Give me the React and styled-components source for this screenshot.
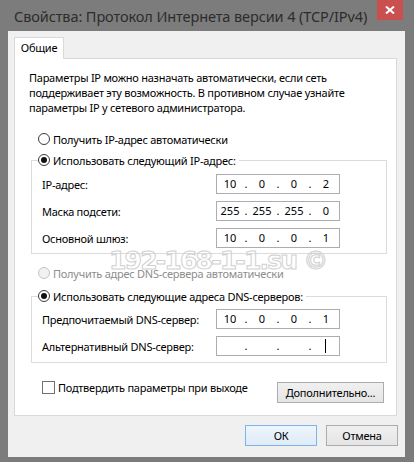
import React from "react"
import styled, {createGlobalStyle} from "styled-components"

const GlobalStyle = createGlobalStyle`
  html, body {
    margin: 0;
    padding: 0;
    background: #7c7c7c;
  }
  * {
    box-sizing: border-box;
  }
`

const FONT = `"Noto Sans", "DejaVu Sans", sans-serif`

const ipRows = [
  {label: "IP-адрес:", value: ["10", "0", "0", "2"]},
  {label: "Маска подсети:", value: ["255", "255", "255", "0"]},
  {label: "Основной шлюз:", value: ["10", "0", "0", "1"]},
]

const dnsRows = [
  {label: "Предпочитаемый DNS-сервер:", value: ["10", "0", "0", "1"]},
  {label: "Альтернативный DNS-сервер:", value: ["", "", "", ""], caret: true},
]

const IpField = ({value, caret}) => (
  <IpBox>
    {value.map((octet, i) => (
      <React.Fragment key={i}>
        {i > 0 && <IpDot>.</IpDot>}
        <IpOctet>
          {octet}
          {caret && i === 3 && <Caret />}
        </IpOctet>
      </React.Fragment>
    ))}
  </IpBox>
)

const FieldRows = ({rows}) => (
  <Fields>
    {rows.map((row) => (
      <FieldRow key={row.label}>
        <FieldLabel>{row.label}</FieldLabel>
        <IpField value={row.value} caret={row.caret} />
      </FieldRow>
    ))}
  </Fields>
)

const CloseIcon = () => (
  <svg width="10" height="8" viewBox="0 0 10 8">
    <path d="M1 0.5 L9 7.5 M9 0.5 L1 7.5" stroke="#fff" strokeWidth="2" />
  </svg>
)

const App = () => {
  return (
    <>
      <GlobalStyle />
      <Window>
        <TitleBar>
          <Title>Свойства: Протокол Интернета версии 4 (TCP/IPv4)</Title>
          <CloseButton>
            <CloseIcon />
          </CloseButton>
        </TitleBar>
        <Client>
          <Tabs>
            <Tab>Общие</Tab>
          </Tabs>
          <Panel>
            <Description>
              Параметры IP можно назначать автоматически, если сеть
              <br />
              поддерживает эту возможность. В противном случае узнайте
              <br />
              параметры IP у сетевого администратора.
            </Description>

            <RadioRow $top={16}>
              <Radio />
              <span>Получить IP-адрес автоматически</span>
            </RadioRow>

            <Group $top={13} $bottom={5}>
              <Legend>
                <Radio $checked />
                <span>Использовать следующий IP-адрес:</span>
              </Legend>
              <FieldRows rows={ipRows} />
            </Group>

            <RadioRow $top={11} $disabled>
              <Radio $disabled />
              <span>Получить адрес DNS-сервера автоматически</span>
            </RadioRow>

            <Group $top={15} $bottom={6} $fieldsTop={5}>
              <Legend>
                <Radio $checked />
                <span>Использовать следующие адреса DNS-серверов:</span>
              </Legend>
              <FieldRows rows={dnsRows} />
            </Group>

            <OptionsRow>
              <CheckRow>
                <CheckBox />
                <span>Подтвердить параметры при выходе</span>
              </CheckRow>
              <Button $width={107}>Дополнительно...</Button>
            </OptionsRow>

            <Watermark>192-168-1-1.su ©</Watermark>
          </Panel>
          <Footer>
            <Button $width={72} $default>
              ОК
            </Button>
            <Button $width={72}>Отмена</Button>
          </Footer>
        </Client>
      </Window>
    </>
  )
}

export default App

const Window = styled.div`
  width: 414px;
  height: 462px;
  display: flex;
  flex-direction: column;
  background: #7c7c7c;
  font-family: ${FONT};
  font-size: 11px;
  letter-spacing: -0.25px;
  color: #000;
  overflow: hidden;
`
const TitleBar = styled.div`
  height: 31px;
  flex-shrink: 0;
  display: flex;
  align-items: flex-start;
  padding-left: 14px;
`
const Title = styled.div`
  font-size: 14.5px;
  line-height: 32px;
  color: #2c2c2c;
  letter-spacing: -0.1px;
  white-space: nowrap;
`
const CloseButton = styled.div`
  margin-left: auto;
  margin-right: 11px;
  width: 26px;
  height: 20px;
  background: #c9504f;
  display: flex;
  align-items: center;
  justify-content: center;
`
const Client = styled.div`
  flex: 1;
  margin: 0 9px 5px 8px;
  padding: 6px 8px 0 6px;
  background: #f0f0f0;
  display: flex;
  flex-direction: column;
`
const Tabs = styled.div`
  display: flex;
  height: 21px;
  position: relative;
  z-index: 1;
`
const Tab = styled.div`
  width: 50px;
  height: 22px;
  border: 1px solid #d9d9d9;
  border-bottom: none;
  background: #fff;
  text-align: center;
  line-height: 20px;
`
const Panel = styled.div`
  position: relative;
  height: 358px;
  flex-shrink: 0;
  border: 1px solid #d9d9d9;
  background: #fff;
  padding: 11px 9px 0 14px;
  display: flex;
  flex-direction: column;
`
const Description = styled.div`
  line-height: 15px;
`
const RadioRow = styled.div`
  display: flex;
  align-items: center;
  gap: 3px;
  height: 16px;
  margin: ${(p) => p.$top}px 0 0 9px;
  color: ${(p) => (p.$disabled ? "#8d8d8d" : "#000")};
  white-space: nowrap;
`
const Radio = styled.span`
  position: relative;
  width: 12px;
  height: 12px;
  flex-shrink: 0;
  border-radius: 50%;
  border: 1px solid ${(p) => (p.$disabled ? "#c4c4c4" : "#3a3a3a")};
  background: ${(p) => (p.$disabled ? "#f2f2f2" : "#fff")};

  &::after {
    content: "";
    display: ${(p) => (p.$checked ? "block" : "none")};
    position: absolute;
    left: 2px;
    top: 2px;
    width: 6px;
    height: 6px;
    border-radius: 50%;
    background: #111;
  }
`
const Group = styled.div`
  margin: ${(p) => p.$top}px 0 0 2px;
  padding: 0 10px ${(p) => p.$bottom}px 10px;
  border: 1px solid #dcdcdc;
  display: flex;
  flex-direction: column;

  & > div:last-child {
    margin-top: ${(p) => p.$fieldsTop ?? 6}px;
  }
`
const Legend = styled.div`
  align-self: flex-start;
  display: flex;
  align-items: center;
  gap: 3px;
  height: 16px;
  margin: -9px 0 0 -4px;
  padding: 0 3px 0 0;
  background: #fff;
  white-space: nowrap;
`
const Fields = styled.div`
  display: flex;
  flex-direction: column;
  gap: 7px;
`
const FieldRow = styled.div`
  display: flex;
  align-items: center;
  height: 20px;
`
const FieldLabel = styled.span`
  width: 174px;
  flex-shrink: 0;
  white-space: nowrap;
`
const IpBox = styled.div`
  width: 124px;
  height: 20px;
  border: 1px solid #abadb3;
  display: flex;
  align-items: stretch;
  letter-spacing: 0;
`
const IpOctet = styled.span`
  position: relative;
  width: 26px;
  height: 18px;
  text-align: center;
  line-height: 18px;
`
const IpDot = styled.span`
  width: 6px;
  text-align: center;
  line-height: 18px;
`
const Caret = styled.span`
  position: absolute;
  left: 12px;
  top: 2px;
  width: 1px;
  height: 14px;
  background: #000;
`
const OptionsRow = styled.div`
  display: flex;
  align-items: flex-start;
  justify-content: space-between;
  margin: 16px 3px 0 13px;
`
const CheckRow = styled.div`
  display: flex;
  align-items: center;
  gap: 3px;
  height: 16px;
  white-space: nowrap;
`
const CheckBox = styled.span`
  width: 13px;
  height: 13px;
  border: 1px solid #707070;
  background: #fff;
`
const Button = styled.div`
  width: ${(p) => p.$width}px;
  height: 21px;
  margin-top: 3px;
  border: 1px solid ${(p) => (p.$default ? "#7eb4ea" : "#acacac")};
  background: ${(p) =>
    p.$default
      ? "linear-gradient(#eef5fc, #dfebf7)"
      : "linear-gradient(#f0f0f0, #e5e5e5)"};
  display: flex;
  align-items: center;
  justify-content: center;
  white-space: nowrap;
`
const Footer = styled.div`
  display: flex;
  justify-content: flex-end;
  gap: 9px;
  margin: 6px -1px 0 0;
`
const Watermark = styled.div`
  position: absolute;
  left: 94px;
  top: 187px;
  font-family: "DejaVu Sans", sans-serif;
  font-weight: bold;
  font-size: 25px;
  letter-spacing: -1.8px;
  color: transparent;
  -webkit-text-stroke: 1px #d0d0d0;
  white-space: nowrap;
  pointer-events: none;
`
